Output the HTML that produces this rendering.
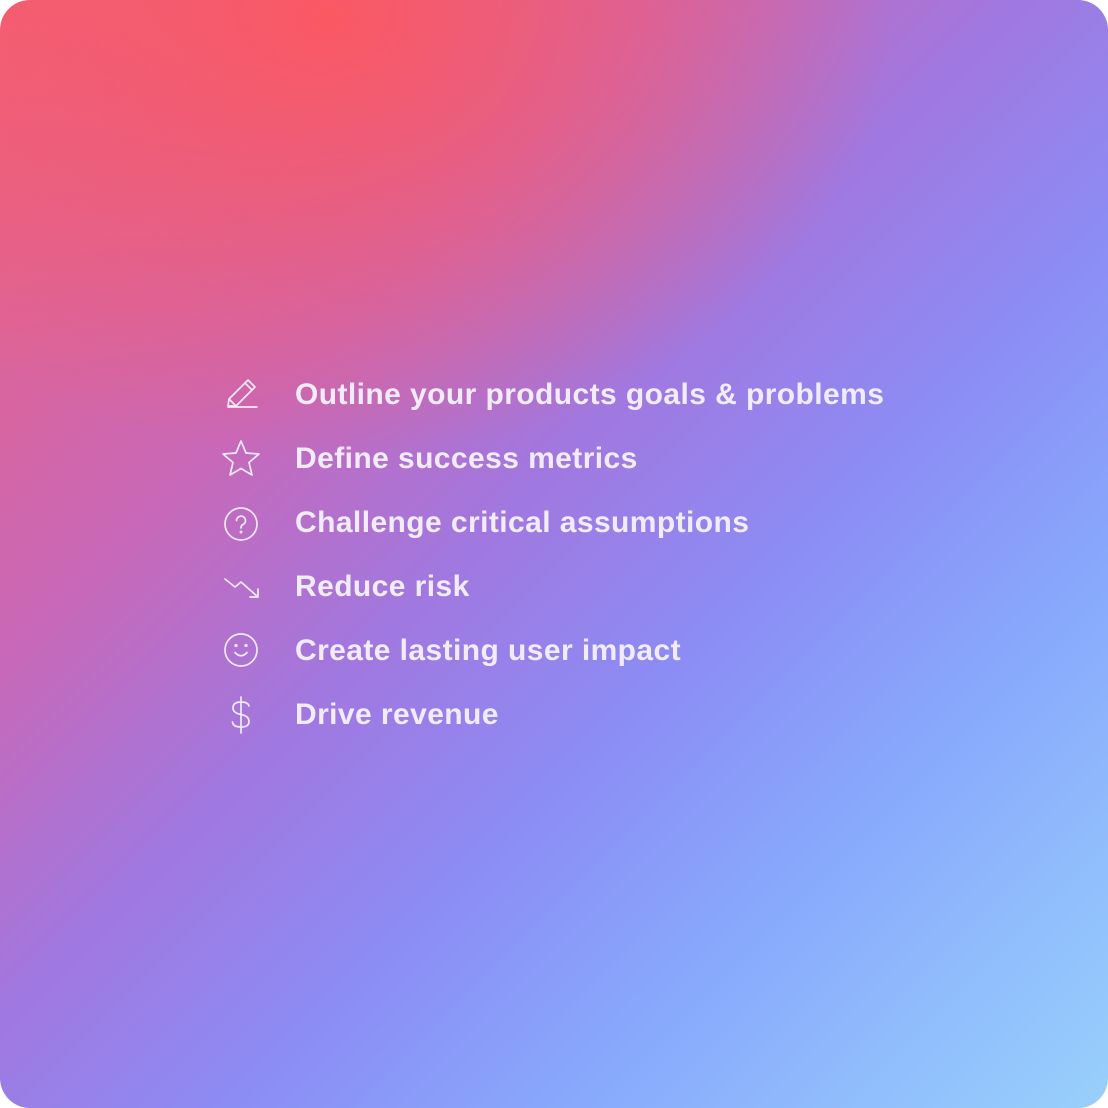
<!DOCTYPE html>
<html><head><style>
html,body{margin:0;padding:0;background:#fff;}
.card{position:absolute;left:0;top:0;width:1108px;height:1108px;border-radius:30px;overflow:hidden;
background:
radial-gradient(ellipse 560px 440px at 330px 20px, rgba(252,88,96,0.95), rgba(252,88,96,0) 100%),
linear-gradient(135deg,#f0607a 0%,#c868b8 30%,#a078e0 46%,#8c8cf4 60%,#88a8fc 75%,#98d0fc 100%);}
.item{position:absolute;left:220px;height:40px;display:flex;align-items:center;}
.item svg{width:42px;height:42px;fill:none;stroke:#f0eaf8;stroke-width:1.7;stroke-linecap:round;stroke-linejoin:round;}
.item span{position:absolute;left:75px;white-space:nowrap;font-family:"Liberation Sans",sans-serif;font-weight:bold;font-size:30px;color:#f2ecfa;letter-spacing:0.42px;}
</style></head><body><div class="card">
<div class="item" style="top:375px"><svg viewBox="0 0 42 42"><path d="M8 32 L9 25 L28 6 L35 13 L16 32 Z M25 9 L32 16 M9 25 L16 32 M8 33 H37"/></svg><span>Outline your products goals &amp; problems</span></div>
<div class="item" style="top:439px"><svg viewBox="0 0 42 42"><path d="M21 3 L26 15 L39 16 L29 24.5 L32 37 L21 30.5 L10 37 L13 24.5 L3 16 L16 15 Z"/></svg><span>Define success metrics</span></div>
<div class="item" style="top:503px"><svg viewBox="0 0 42 42"><circle cx="21" cy="22" r="16"/><path d="M16.5 18.5 A4.5 4.5 0 1 1 22 23 Q21 24 21 26"/><circle cx="21" cy="30" r="0.6" fill="#f0eaf8"/></svg><span>Challenge critical assumptions</span></div>
<div class="item" style="top:567px"><svg viewBox="0 0 42 42"><path d="M5 13 L15 21 L21 16 L38 31 M38 23 V31 H30"/></svg><span>Reduce risk</span></div>
<div class="item" style="top:631px"><svg viewBox="0 0 42 42"><circle cx="21" cy="20" r="16"/><path d="M15 22.5 Q21 29 27 22.5"/><circle cx="16" cy="15.5" r="0.8" fill="#f0eaf8"/><circle cx="26" cy="15.5" r="0.8" fill="#f0eaf8"/></svg><span>Create lasting user impact</span></div>
<div class="item" style="top:695px"><svg viewBox="0 0 42 42"><path d="M21 3 V39 M29 12 Q28 8 21 8 Q13 8 13 14 Q13 19 21 20.5 Q29 22 29 27.5 Q29 33 21 33 Q13 33 12.5 28"/></svg><span>Drive revenue</span></div>
</div></body></html>
